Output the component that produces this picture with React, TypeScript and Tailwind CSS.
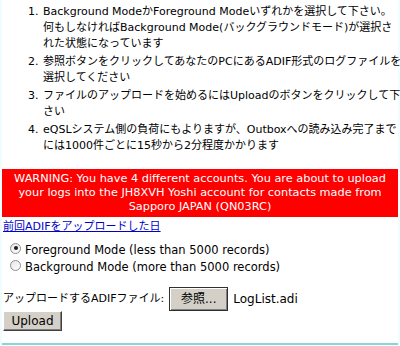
import React, { useState } from 'react';

const steps: string[][] = [
  [
    'Background ModeかForeground Modeいずれかを選択して下さい。',
    '何もしなければBackground Mode(バックグラウンドモード)が選択さ',
    'れた状態になっています',
  ],
  ['参照ボタンをクリックしてあなたのPCにあるADIF形式のログファイルを', '選択してください'],
  ['ファイルのアップロードを始めるにはUploadのボタンをクリックして下', 'さい'],
  ['eQSLシステム側の負荷にもよりますが、Outboxへの読み込み完了まで', 'には1000件ごとに15秒から2分程度かかります'],
];

function Radio({ checked, onClick, label }: { checked: boolean; onClick: () => void; label: string }) {
  return (
    <label className="flex items-center gap-[4px] leading-[16px] cursor-pointer" onClick={onClick}>
      <span className="w-[11px] h-[11px] -mt-[4px] rounded-full border border-[#8c8c8c] bg-gradient-to-br from-[#e6e6e6] to-white flex items-center justify-center">
        {checked && <span className="w-[4px] h-[4px] rounded-full bg-[#1a1a1a]" />}
      </span>
      {label}
    </label>
  );
}

export default function App() {
  const [mode, setMode] = useState<'fg' | 'bg'>('fg');

  return (
    <div className="w-[400px] h-[346px] bg-[#f0fdff] px-[2px] font-['DejaVu_Sans','Noto_Sans_CJK_JP',sans-serif] text-[11px] text-black">
      <div className="h-[345px] bg-white border-b-2 border-[#8fd3d3] flex flex-col">
        {/* Instructions */}
        <ol className="pt-[4px] pl-[26px] flex flex-col gap-[2px]">
          {steps.map((lines, i) => (
            <li key={i} className="flex leading-[16px] whitespace-nowrap">
              <span className="w-[15px] shrink-0">{i + 1}.</span>
              <span className="flex flex-col">
                {lines.map((l, j) => (
                  <span key={j}>{l}</span>
                ))}
              </span>
            </li>
          ))}
        </ol>

        {/* Warning banner */}
        <div className="mt-[15px] bg-[#ff0000] text-white text-center text-[11.3px] leading-[14px] pt-[3px] pb-[3px]">
          WARNING: You have 4 different accounts. You are about to upload
          <br />
          your logs into the JH8XVH Yoshi account for contacts made from
          <br />
          Sapporo JAPAN (QN03RC)
        </div>

        <a href="#" className="mt-[2px] ml-[1px] self-start text-[#0000cc] underline leading-[16px]">
          前回ADIFをアップロードした日
        </a>

        {/* Mode radios */}
        <div className="mt-[7px] flex flex-col gap-[1px] pl-[8px] text-[11.5px]">
          <Radio checked={mode === 'fg'} onClick={() => setMode('fg')} label="Foreground Mode (less than 5000 records)" />
          <Radio checked={mode === 'bg'} onClick={() => setMode('bg')} label="Background Mode (more than 5000 records)" />
        </div>

        {/* File picker */}
        <div className="mt-[12px] pl-[1px] flex items-center gap-[5px]">
          <span>アップロードするADIFファイル:</span>
          <button className="w-[59px] h-[24px] bg-[#d4d0c8] border border-[#303030] shadow-[inset_1px_1px_0_#ffffff,inset_-1px_-1px_0_#808080] text-[12px]">
            参照...
          </button>
          <span className="text-[12px]">LogList.adi</span>
        </div>

        <div className="pl-[1px]">
          <button className="w-[59px] h-[20px] bg-[#d4d0c8] border border-t-[#ffffff] border-l-[#ffffff] border-r-[#404040] border-b-[#404040] shadow-[inset_-1px_-1px_0_#808080] text-[12px] leading-[16px]">
            Upload
          </button>
        </div>
      </div>
    </div>
  );
}
